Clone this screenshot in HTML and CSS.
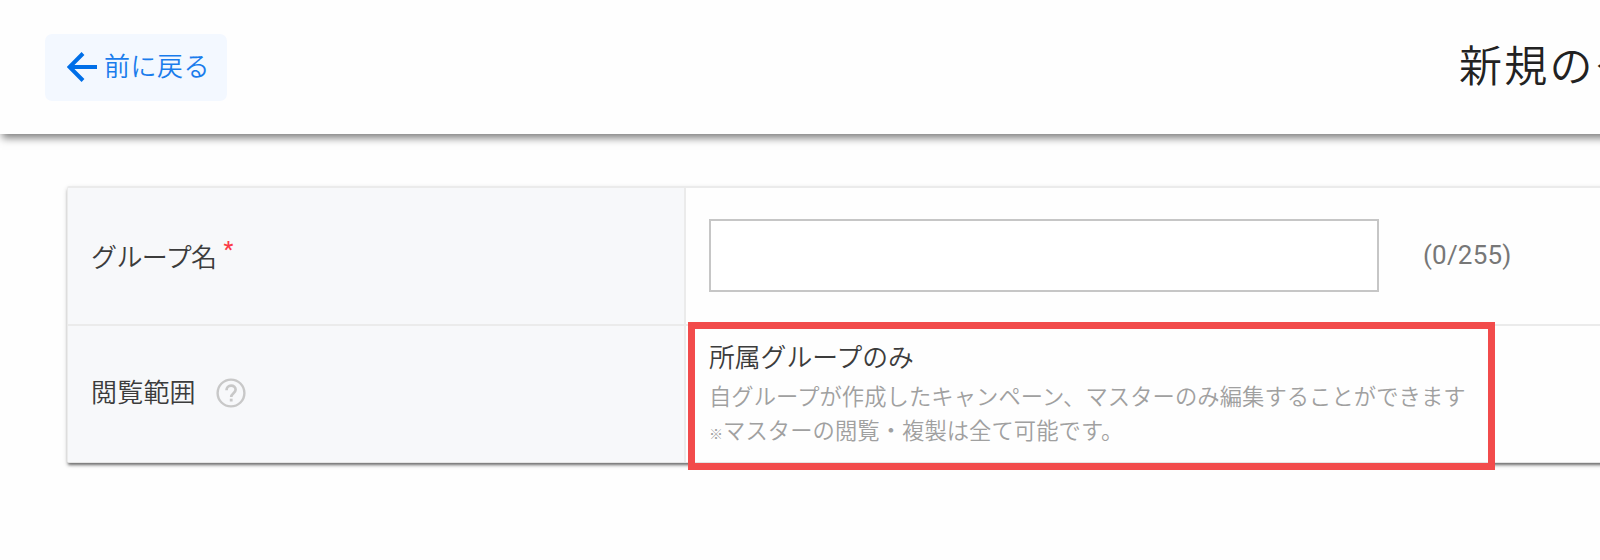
FILE: index.html
```html
<!DOCTYPE html>
<html lang="ja">
<head>
<meta charset="utf-8">
<title>新規のグループ</title>
<link rel="stylesheet" href="styles.css">
</head>
<body>
<header class="header">
  <a class="back">
    <svg class="back-icon" viewBox="0 0 30 30" width="30" height="30"><path d="M16 1.5 2.5 15 16 28.5M3 15h27" fill="none" stroke="#006fe8" stroke-width="4"/></svg>
    <span class="back-text">前に戻る</span>
  </a>
  <h1 class="title">新規のグ</h1>
</header>
<main class="card">
  <div class="row">
    <div class="label"><span class="name">グループ名</span><span class="required">*</span></div>
    <div class="field">
      <input class="input" type="text">
      <span class="count">(0/255)</span>
    </div>
  </div>
  <div class="row">
    <div class="label scope-label"><span class="scope-name">閲覧範囲</span>
      <svg class="help" viewBox="0 0 30 30" width="30" height="30"><g fill="none" stroke="#c8c8c8"><circle cx="15" cy="15" r="13.4" stroke-width="2.4"/><path d="M10.5 12.2c0-2.8 2-4.5 4.6-4.5s4.5 1.6 4.5 4.1c0 3.2-4.4 3.6-4.4 7.2" stroke-width="2.7"/><path d="M15.2 20.7v2.8" stroke-width="2.8"/></g></svg>
    </div>
    <div class="field scope">
      <p class="choice">所属グループのみ</p>
      <p class="note">自グループが作成したキャンペーン、マスターのみ編集することができます</p>
      <p class="note"><span class="mark">※</span>マスターの閲覧・複製は全て可能です。</p>
      <div class="highlight"></div>
    </div>
  </div>
</main>
</body>
</html>
```
FILE: styles.css
```css
* { box-sizing: border-box; }
body {
  margin: 0;
  height: 560px;
  overflow: hidden;
  background: #fefefe;
  font-family: Roboto, "Noto Sans CJK JP", sans-serif;
  color: #3c3c3c;
}
.header {
  display: flex;
  align-items: center;
  justify-content: space-between;
  width: 1800px;
  height: 134px;
  margin-left: 2px;
  padding-left: 43px;
  background: #fefefe;
  box-shadow: 0 4px 8px rgba(0, 0, 0, .5);
  clip-path: polygon(0 0, 100% 0, 100% 160px, -2px 160px, -2px 134px, 0 134px);
}
.back {
  display: flex;
  align-items: center;
  width: 182px;
  height: 67px;
  padding-left: 22px;
  border-radius: 7px;
  background: #f3f8ff;
  color: #1a7cec;
}
.back-icon { display: block; flex: none; }
.back-text {
  margin-left: 7px;
  font-size: 26px;
  font-weight: 350;
  line-height: 36px;
  letter-spacing: .5px;
  white-space: nowrap;
}
.title {
  width: 343px;
  margin: 0;
  padding-bottom: 9px;
  font-family: "Noto Sans CJK JP", sans-serif;
  font-size: 43px;
  font-weight: 350;
  line-height: 60px;
  letter-spacing: 2.3px;
  white-space: nowrap;
  color: #222;
}
.card {
  width: 1700px;
  margin: 52px 0 0 67px;
  border: 2px solid #ebebeb;
  border-left-width: 1px;
  border-bottom: 1px solid #e4e4e4;
  border-radius: 2px;
  background: #fefefe;
  box-shadow: 0 3px 3px -1px rgba(0, 0, 0, .5), 0 2px 5px rgba(0, 0, 0, .15);
}
.row { display: flex; height: 136px; }
.row + .row { height: 138px; border-top: 2px solid #ebebeb; }
.label {
  display: flex;
  align-items: center;
  width: 618px;
  padding-left: 23px;
  border-right: 2px solid #ebebeb;
  background: #f7f8fa;
  font-family: "Noto Sans CJK JP", sans-serif;
  font-size: 26px;
  font-weight: 350;
}
.name {
  padding-bottom: 1px;
  letter-spacing: -.6px;
}
.required {
  margin: -14px 0 0 7px;
  font-family: Roboto, sans-serif;
  font-size: 22px;
  font-weight: 500;
  color: #fb3b48;
}
.scope-label { padding-bottom: 7px; }
.scope-name { letter-spacing: .2px; }
.help { margin: 4px 0 0 20px; }
.field {
  position: relative;
  display: flex;
  align-items: center;
  flex: 1;
  padding-left: 23px;
}
.input {
  width: 670px;
  height: 73px;
  margin-bottom: 1px;
  border: 2px solid #c6c6c6;
  background: #fff;
}
.count {
  margin: -2px 0 0 44px;
  font-size: 26px;
  letter-spacing: .2px;
  color: #777;
}
.scope {
  flex-direction: column;
  align-items: flex-start;
  padding-top: 11px;
}
.choice, .note {
  margin: 0;
  font-family: "Noto Sans CJK JP", sans-serif;
  font-weight: 350;
  white-space: nowrap;
}
.choice {
  margin: -1px 0 2px;
  font-size: 25.8px;
  line-height: 40px;
}
.note {
  font-size: 22.3px;
  line-height: 34px;
  letter-spacing: .07px;
  color: #a0a0a0;
}
.mark {
  font-size: 14px;
  font-weight: 700;
}
.highlight {
  position: absolute;
  left: 2px;
  top: -4px;
  width: 807px;
  height: 148px;
  border: 7px solid #f24b4b;
}
```
